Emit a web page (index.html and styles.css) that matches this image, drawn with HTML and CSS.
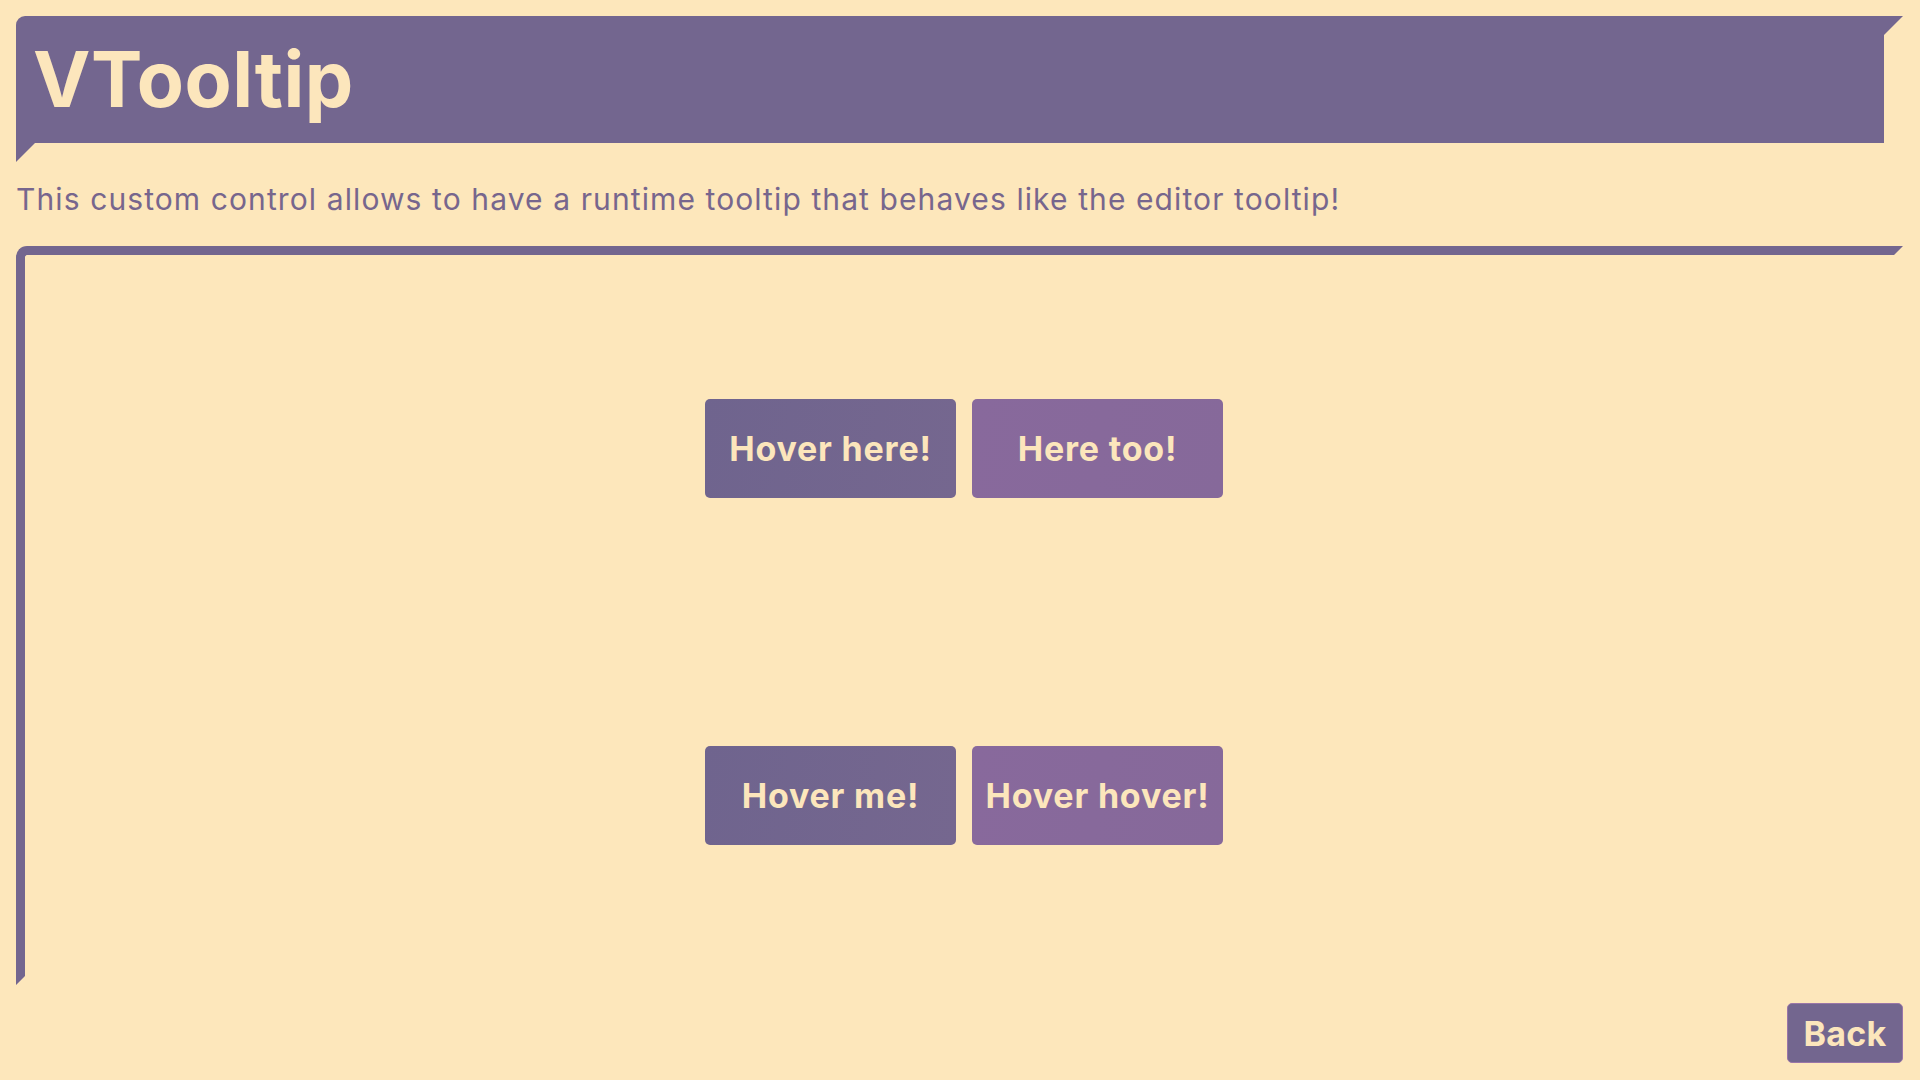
FILE: index.html
```html
<!DOCTYPE html>
<html lang="en">
<head>
<meta charset="utf-8">
<title>VTooltip</title>
<link rel="stylesheet" href="styles.css">
</head>
<body>
<div class="page">
  <header class="title-bar">
    <h1 class="title">VTooltip</h1>
  </header>
  <p class="description">This custom control allows to have a runtime tooltip that behaves like the editor tooltip!</p>
  <section class="panel">
    <div class="row">
      <button class="btn btn-a">Hover here!</button>
      <button class="btn btn-b">Here too!</button>
    </div>
    <div class="row">
      <button class="btn btn-a">Hover me!</button>
      <button class="btn btn-b">Hover hover!</button>
    </div>
  </section>
  <footer class="footer">
    <button class="back">Back</button>
  </footer>
</div>
</body>
</html>
```

FILE: styles.css
```css
html, body {
  margin: 0;
  padding: 0;
  background: #fde7bb;
  width: 1920px;
  height: 1080px;
  overflow: hidden;
}

.page {
  box-sizing: border-box;
  height: 1080px;
  padding: 16px 17px 0 16px;
  display: flex;
  flex-direction: column;
  font-family: Inter, "Noto Sans", sans-serif;
}

.title-bar {
  box-sizing: border-box;
  height: 146px;
  padding: 0 19px 19px 17px;
  background: #73668f;
  border-top-left-radius: 9px;
  display: flex;
  align-items: center;
  clip-path: polygon(0 0, 100% 0, calc(100% - 19px) 19px, calc(100% - 19px) calc(100% - 19px), 19px calc(100% - 19px), 0 100%);
}

.title {
  margin: 0;
  font-size: 77px;
  line-height: 1;
  font-weight: 700;
  color: #fce6bc;
  letter-spacing: 0.5px;
}

.description {
  margin: 19px 0 29px 0;
  font-size: 30px;
  line-height: 36px;
  color: #77668d;
  font-weight: 400;
  letter-spacing: 1.1px;
}

.panel {
  box-sizing: border-box;
  height: 739px;
  border-top: 9px solid #73668f;
  border-left: 9px solid #73668f;
  border-top-left-radius: 11px;
  padding: 144px 0 0 0;
  display: flex;
  flex-direction: column;
  align-items: center;
  gap: 248px;
  clip-path: polygon(0 0, 100% 0, calc(100% - 9px) 9px, calc(100% - 9px) calc(100% - 9px), 9px calc(100% - 9px), 0 100%);
}

.row {
  display: flex;
  gap: 16px;
}

.btn {
  width: 251px;
  height: 99px;
  border: none;
  border-radius: 5px;
  font-family: Inter, "Noto Sans", sans-serif;
  font-size: 34px;
  font-weight: 700;
  color: #fce6bc;
  padding: 0;
  letter-spacing: 0.8px;
}

.btn-a {
  background: linear-gradient(100deg, #6f648e, #75678f);
}

.btn-b {
  background: linear-gradient(100deg, #88699c, #86699a);
}

.footer {
  display: flex;
  justify-content: flex-end;
  margin-top: 18px;
}

.back {
  box-sizing: border-box;
  width: 116px;
  height: 60px;
  border: 1px solid #9a76a8;
  border-radius: 5px;
  background: #73668f;
  color: #fce6bc;
  font-family: Inter, "Noto Sans", sans-serif;
  font-size: 34px;
  font-weight: 700;
  padding: 0;
  letter-spacing: 0.3px;
}
```
